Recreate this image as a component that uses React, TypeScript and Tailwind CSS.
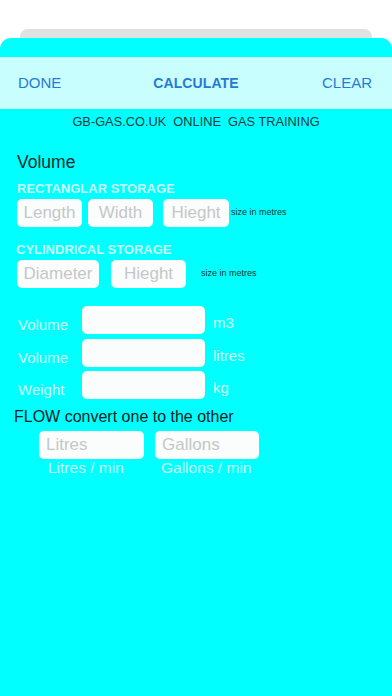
const font = { fontFamily: '"Liberation Sans", Arial, sans-serif' };

function Field({ placeholder = "", className = "" }: { placeholder?: string; className?: string }) {
  return (
    <div
      className={`h-[28px] rounded-[5px] bg-[#fbfdfd] flex items-center justify-center text-[17px] text-[#c4c7c7] ${className}`}
    >
      {placeholder}
    </div>
  );
}

function ResultRow({ label, unit, className = "" }: { label: string; unit: string; className?: string }) {
  return (
    <div className={`flex items-center h-[28px] ${className}`}>
      <span className="w-[64px] mt-[10px] text-[15px] text-[#d4ffff]">{label}</span>
      <Field className="w-[123px] shrink-0" />
      <span className="ml-[8px] mt-[7px] text-[15px] text-[#d4ffff]">{unit}</span>
    </div>
  );
}

export default function App() {
  return (
    <div className="w-[392px] h-[696px] bg-white flex flex-col overflow-hidden" style={font}>
      <div className="mt-[29px] mx-[20px] h-[9px] rounded-t-[8px] bg-[#dfe2e2]" />
      <div className="flex-1 bg-[#00ffff] rounded-t-[11px]">
        <div className="mt-[19px] h-[52px] bg-[#c9fefe] flex items-center justify-between px-[18px] text-[15px] text-[#2879d4]">
          <span className="w-[60px]">DONE</span>
          <span className="font-bold text-[14px] tracking-[0.1px]">CALCULATE</span>
          <span className="w-[60px] text-right pr-[2px]">CLEAR</span>
        </div>
        <div className="h-[26px] flex items-center justify-center text-[12.8px] text-[#173c3c] whitespace-pre">
          {"GB-GAS.CO.UK  ONLINE  GAS TRAINING"}
        </div>

        <div className="pl-[17px] mt-[15px] h-[24px] flex items-center text-[17.5px] text-[#0d2a2a]">Volume</div>

        <div className="pl-[17px] mt-[8px] h-[14px] flex items-center text-[13px] font-bold text-[#c8ffff]">
          RECTANGLAR STORAGE
        </div>
        <div className="pl-[17px] mt-[3px] flex items-center">
          <Field placeholder="Length" className="w-[65px]" />
          <Field placeholder="Width" className="w-[65px] ml-[6px]" />
          <Field placeholder="Hieght" className="w-[66px] ml-[10px]" />
          <span className="ml-[2px] text-[9px] text-[#143434]">size in metres</span>
        </div>

        <div className="pl-[16px] mt-[16px] h-[14px] flex items-center text-[13px] font-bold text-[#c8ffff]">
          CYLINDRICAL STORAGE
        </div>
        <div className="pl-[17px] mt-[3px] flex items-center">
          <Field placeholder="Diameter" className="w-[82px]" />
          <Field placeholder="Hieght" className="w-[75px] ml-[12px]" />
          <span className="ml-[15px] text-[9px] text-[#143434]">size in metres</span>
        </div>

        <div className="pl-[18px]">
          <ResultRow label="Volume" unit="m3" className="mt-[18px]" />
          <ResultRow label="Volume" unit="litres" className="mt-[5px]" />
          <ResultRow label="Weight" unit="kg" className="mt-[4px]" />
        </div>

        <div className="pl-[14px] mt-[9px] h-[18px] flex items-center text-[16px] text-[#0d2222]">
          FLOW convert one to the other
        </div>
        <div className="pl-[39px] mt-[5px] flex items-center">
          <Field placeholder="Litres" className="w-[105px] !justify-start pl-[7px]" />
          <Field placeholder="Gallons" className="w-[104px] ml-[11px] !justify-start pl-[7px]" />
        </div>
        <div className="flex mt-[1px] h-[16px] items-center text-[15.5px] text-[#c8ffff]">
          <span className="ml-[48px] w-[113px]">Litres / min</span>
          <span>Gallons / min</span>
        </div>
      </div>
    </div>
  );
}
